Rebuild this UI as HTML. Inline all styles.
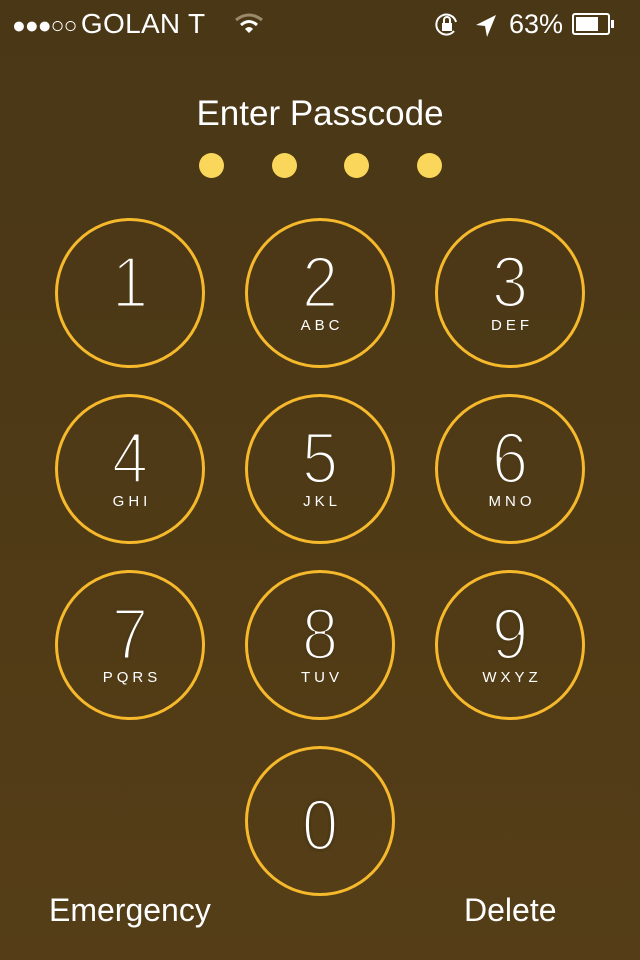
<!DOCTYPE html>
<html><head><meta charset="utf-8"><style>
*{margin:0;padding:0;box-sizing:border-box}
body{width:640px;height:960px;overflow:hidden;background:linear-gradient(#493716 0%,#4d3916 40%,#553e17 100%);font-family:"Liberation Sans",sans-serif;color:#fff;position:relative}
.a{position:absolute}
.c{position:absolute;width:150px;height:150px;border:3px solid #f6b92c;border-radius:50%}
.c .d{position:absolute;left:0;right:0;top:22px;text-align:center;font-size:72px;line-height:80px;color:#fff;-webkit-text-stroke:3px #4d3916;transform:scaleX(0.9)}
.c .l{position:absolute;left:0;right:0;top:96px;text-align:center;font-size:15px;letter-spacing:4px;padding-left:4px}
.dot{position:absolute;width:25px;height:25px;border-radius:50%;background:#fad75a;top:153px}
</style></head><body>
<div class="a" style="left:12px;top:9px;line-height:30px;white-space:nowrap"><span style="font-size:23px;letter-spacing:-1px">●●●○○</span> <span style="font-size:28px;letter-spacing:0.3px">GOLAN T</span></div>
<svg class="a" style="left:234px;top:12px" width="30" height="24" viewBox="0 0 30 24"><path d="M2 8 Q15 -2 28 8" stroke="#9a8a6a" stroke-width="3" fill="none"/><path d="M7 13 Q15 6 23 13" stroke="#fff" stroke-width="3" fill="none"/><path d="M11 17 Q15 13 19 17 L15 21 Z" fill="#fff"/></svg>
<svg class="a" style="left:434px;top:12px" width="26" height="26" viewBox="0 0 26 26"><path d="M20 19 A10 10 0 1 1 22 10" stroke="#fff" stroke-width="2" fill="none"/><rect x="8" y="11" width="10" height="8" fill="#fff"/><path d="M10 11 V8 A3 3 0 0 1 16 8 V11" stroke="#fff" stroke-width="2" fill="none"/></svg>
<svg class="a" style="left:474px;top:13px" width="24" height="26" viewBox="0 0 24 26"><path d="M22 2 L2 12 L11 13 L13 24 Z" fill="#fff"/></svg>
<div class="a" style="left:509px;top:9px;font-size:27px;line-height:30px">63%</div>
<div class="a" style="left:572px;top:13px;width:38px;height:22px;border:2px solid #fff;border-radius:3px"><div style="position:absolute;left:2px;top:2px;width:22px;height:14px;background:#fff"></div></div>
<div class="a" style="left:611px;top:20px;width:3px;height:8px;background:#fff"></div>
<div class="a" style="left:0;width:640px;top:94px;text-align:center;font-size:35px;line-height:40px">Enter Passcode</div>
<div class="dot" style="left:199px"></div><div class="dot" style="left:272px"></div><div class="dot" style="left:344px"></div><div class="dot" style="left:417px"></div>
<div class="c" style="left:55px;top:218px"><div class="d">1</div></div>
<div class="c" style="left:245px;top:218px"><div class="d">2</div><div class="l">ABC</div></div>
<div class="c" style="left:435px;top:218px"><div class="d">3</div><div class="l">DEF</div></div>
<div class="c" style="left:55px;top:394px"><div class="d">4</div><div class="l">GHI</div></div>
<div class="c" style="left:245px;top:394px"><div class="d">5</div><div class="l">JKL</div></div>
<div class="c" style="left:435px;top:394px"><div class="d">6</div><div class="l">MNO</div></div>
<div class="c" style="left:55px;top:570px"><div class="d">7</div><div class="l">PQRS</div></div>
<div class="c" style="left:245px;top:570px"><div class="d">8</div><div class="l">TUV</div></div>
<div class="c" style="left:435px;top:570px"><div class="d">9</div><div class="l">WXYZ</div></div>
<div class="c" style="left:245px;top:746px"><div class="d" style="top:37px">0</div></div>
<div class="a" style="left:49px;top:892px;font-size:32px;line-height:36px">Emergency</div>
<div class="a" style="left:464px;top:892px;font-size:32px;line-height:36px">Delete</div>
</body></html>
